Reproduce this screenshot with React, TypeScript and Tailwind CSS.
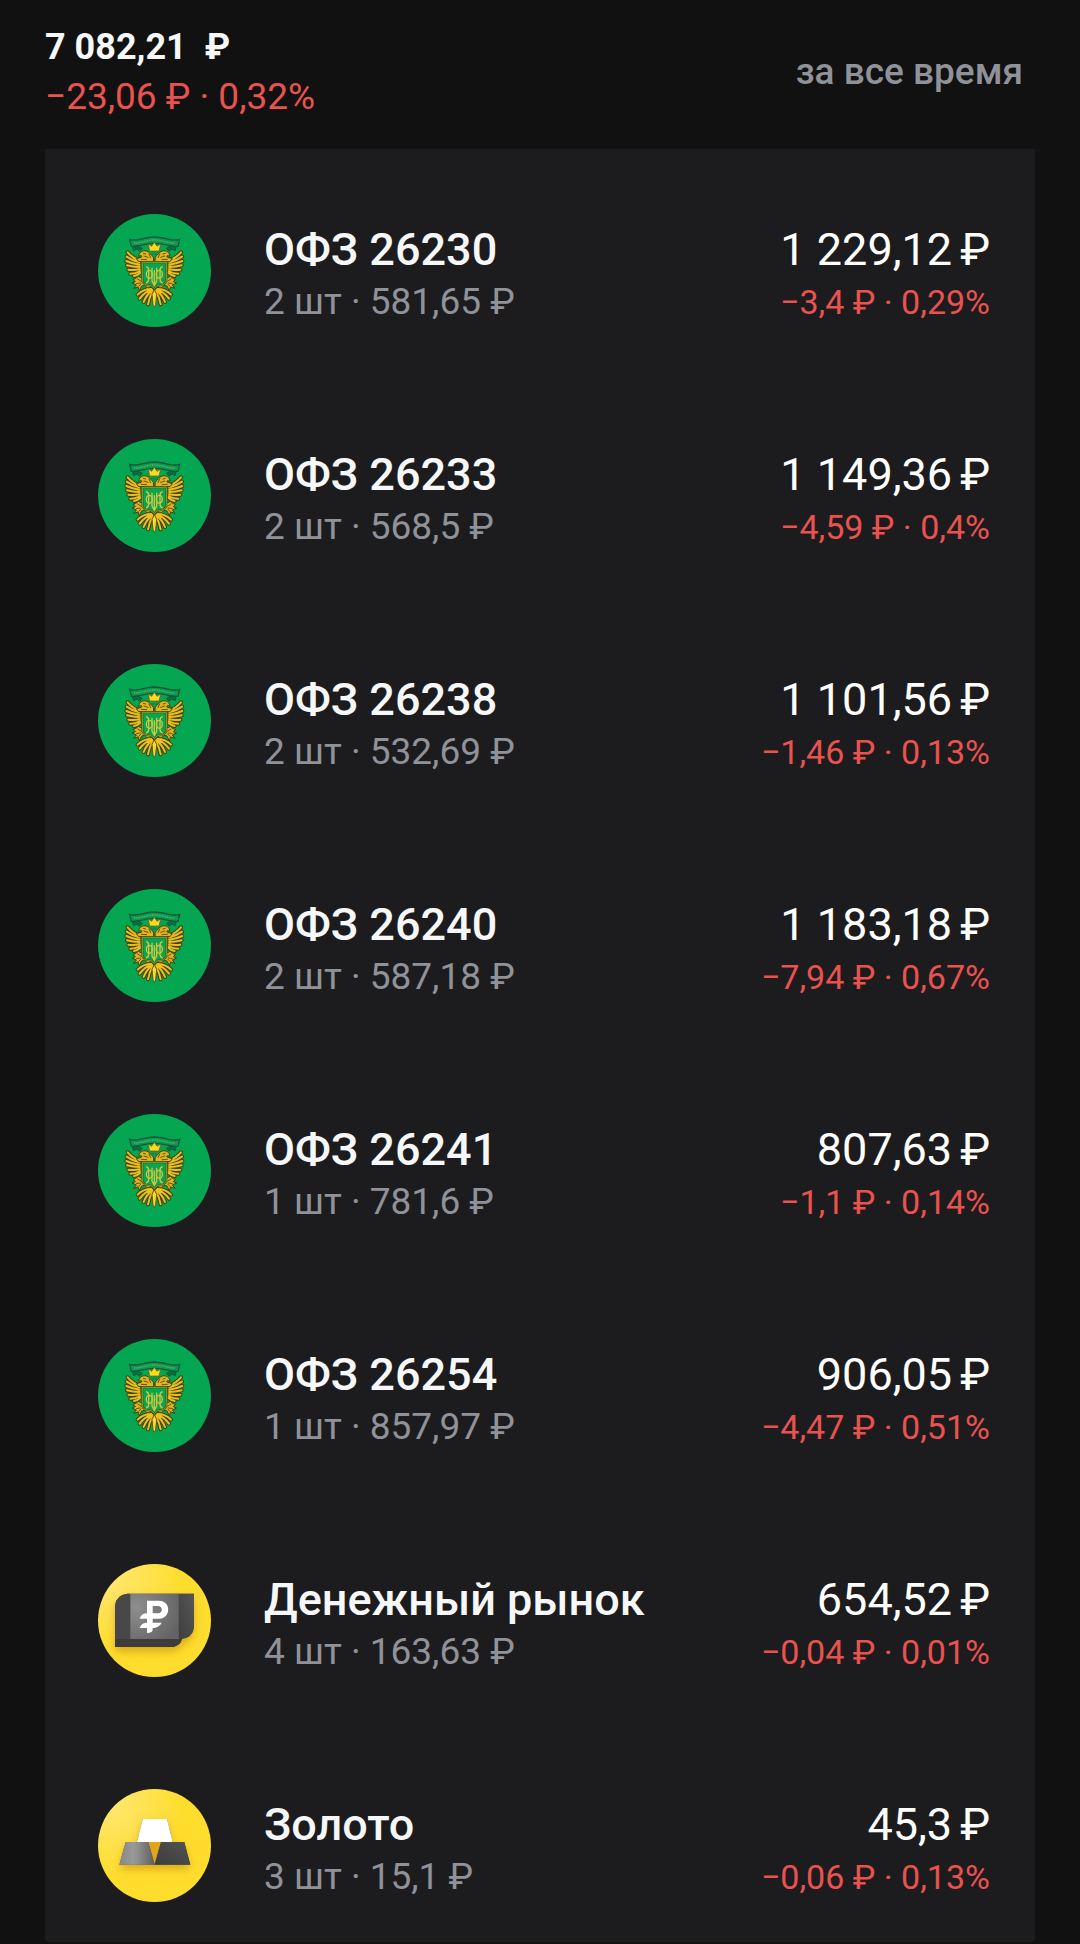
type IconKind = "eagle" | "money" | "gold";

type Holding = {
  name: string;
  icon: IconKind;
  quantity: string;
  value: string;
  change: string;
};

const holdings: Holding[] = [
  { name: "ОФЗ 26230", icon: "eagle", quantity: "2 шт · 581,65 ₽", value: "1 229,12", change: "−3,4 ₽ · 0,29%" },
  { name: "ОФЗ 26233", icon: "eagle", quantity: "2 шт · 568,5 ₽", value: "1 149,36", change: "−4,59 ₽ · 0,4%" },
  { name: "ОФЗ 26238", icon: "eagle", quantity: "2 шт · 532,69 ₽", value: "1 101,56", change: "−1,46 ₽ · 0,13%" },
  { name: "ОФЗ 26240", icon: "eagle", quantity: "2 шт · 587,18 ₽", value: "1 183,18", change: "−7,94 ₽ · 0,67%" },
  { name: "ОФЗ 26241", icon: "eagle", quantity: "1 шт · 781,6 ₽", value: "807,63", change: "−1,1 ₽ · 0,14%" },
  { name: "ОФЗ 26254", icon: "eagle", quantity: "1 шт · 857,97 ₽", value: "906,05", change: "−4,47 ₽ · 0,51%" },
  { name: "Денежный рынок", icon: "money", quantity: "4 шт · 163,63 ₽", value: "654,52", change: "−0,04 ₽ · 0,01%" },
  { name: "Золото", icon: "gold", quantity: "3 шт · 15,1 ₽", value: "45,3", change: "−0,06 ₽ · 0,13%" },
];

const wingFeathers =
  "M148 166Q128 160 113 142M148 172Q126 167 110 155M148 179Q126 176 109 168M148 186Q128 186 111 181M148 193Q132 197 115 194M149 199Q137 206 121 206M150 204Q143 211 132 213";
const tailFeathers =
  "M184 252Q160 252 143 269M186 254Q164 260 149 281M187 256Q170 268 161 291M189 258Q178 276 174 298";

function EagleHalf() {
  return (
    <g strokeLinecap="round">
      {/* wing */}
      <path d={wingFeathers} fill="none" stroke="#3c430f" strokeWidth="12" />
      <path d="M122 148Q132 158 150 163L154 205L146 205L140 170Z" fill="#8a7014" />
      <path d={wingFeathers} fill="none" stroke="#ecbd1f" strokeWidth="6" />
      {/* head and neck */}
      <path
        d="M190 170H146L139 161L153 157C160 153 153 150 146 154C147 142 157 135 169 138C180 141 182 150 190 156Z"
        fill="#e2b41d"
        stroke="#3f410f"
        strokeWidth="3"
      />
      <path d="M160 145L167 147M162 153L174 157M177 147L182 158M154 163L170 164" stroke="#6a540b" strokeWidth="3" />
      {/* leg and claw */}
      <path
        d="M157 220L145 214L136 221L129 223L136 230L126 234L139 240L131 250L144 246L148 257L155 243L164 241L171 248L184 252L178 237L167 229Z"
        fill="#ddb01f"
        stroke="#3e420f"
        strokeWidth="3"
      />
      <path d="M143 222L156 230M139 236L151 234M161 227L174 240M146 244L153 237" stroke="#6a560d" strokeWidth="3" />
      {/* tail */}
      <path d={tailFeathers} fill="none" stroke="#3c430f" strokeWidth="12" />
      <path d={tailFeathers} fill="none" stroke="#eebf1f" strokeWidth="6" />
    </g>
  );
}

function EagleIcon() {
  return (
    <svg viewBox="24 27 339 339" className="size-full" aria-hidden="true">
      <circle cx="193.5" cy="196.5" r="169.5" fill="#04a651" />
      <EagleHalf />
      <g transform="matrix(-1 0 0 1 386 0)">
        <EagleHalf />
      </g>
      {/* ribbon */}
      <path
        d="M119 103C141 111 160 96 193 96C226 96 247 111 269 103L264 124C244 127 224 115 193 115C162 115 143 127 124 124Z"
        fill="#0b9a52"
        stroke="#0b5a3a"
        strokeWidth="4"
      />
      <path d="M132 114C153 115 169 105 193 105C217 105 235 115 255 114" fill="none" stroke="#62b065" strokeWidth="4" strokeDasharray="3 2" />
      <path
        d="M128 125L130 137L142 132L148 139L157 130L143 123ZM258 125L256 137L244 132L238 139L229 130L243 123Z"
        fill="#07703f"
        stroke="#0a5a38"
        strokeWidth="3"
      />
      {/* crown */}
      <path d="M179 138L175 117L185 124L193 112L201 124L212 117L207 138Z" fill="#ffd91e" stroke="#665a10" strokeWidth="2" />
      <path d="M183 143H203L199 152L193 148L187 152Z" fill="#0c8d48" />
      {/* shield */}
      <path d="M157 172H229V224C229 238 217 241 203 242L193 251L183 242C169 241 157 238 157 224Z" fill="#08a552" stroke="#2a5c1a" strokeWidth="6" />
      <path d="M157 172H229V224C229 238 217 241 203 242L193 250L183 242C169 241 157 238 157 224Z" fill="none" stroke="#dcb422" strokeWidth="2" />
      <g fill="none" stroke="#d6c53a" strokeWidth="4">
        <path d="M168 185Q176 186 176 196V222Q176 232 168 234M218 185Q210 186 210 196V222Q210 232 218 234M186 188V228L193 241L200 228V188M193 196V241" />
        <ellipse cx="178" cy="208" rx="9" ry="12" />
        <ellipse cx="208" cy="208" rx="9" ry="12" />
      </g>
      <path d="M193 254L186 268L189 300L193 307L197 300L200 268Z" fill="#ffd829" stroke="#625710" strokeWidth="3" />
    </svg>
  );
}

function MoneyIcon() {
  return (
    <svg viewBox="24 27 339 339" className="size-full" aria-hidden="true">
      <defs>
        <radialGradient id="money-bg" cx="0.1" cy="0.12" r="0.65">
          <stop offset="0" stopColor="#ffe773" />
          <stop offset="1" stopColor="#ffdd2d" />
        </radialGradient>
        <radialGradient id="note-middle" cx="0.1" cy="0.3" r="1">
          <stop offset="0" stopColor="#8e8e8e" />
          <stop offset="1" stopColor="#636363" />
        </radialGradient>
        <linearGradient id="note-edge" x1="1" y1="0" x2="0" y2="1">
          <stop offset="0" stopColor="#565656" />
          <stop offset="1" stopColor="#3e3e3e" />
        </linearGradient>
        <filter id="money-shadow" x="-30%" y="-30%" width="160%" height="170%">
          <feDropShadow dx="0" dy="14" stdDeviation="12" floodColor="#b87800" floodOpacity="0.5" />
        </filter>
      </defs>
      <circle cx="193.5" cy="196.5" r="169.5" fill="url(#money-bg)" />
      <g filter="url(#money-shadow)">
        <path d="M75 152Q78 120 112 116H312V218Q307 248 276 251Q272 271 249 276H75Z" fill="#424242" />
      </g>
      <path d="M265 116H312V218Q307 248 276 251H265Z" fill="url(#note-edge)" />
      <path d="M75 152Q78 120 112 116H121V252H75Z" fill="#484848" />
      <path d="M75 252H276Q272 271 249 276H75Z" fill="#3c3c3c" />
      <rect x="121" y="116" width="145" height="136" fill="url(#note-middle)" />
      <path
        d="M171 137H207C244 137 244 190 207 191H188V203H215Q208 218 188 219V225Q187 234 171 234V219H149Q154 203 171 203V191H149Q154 175 171 175ZM188 153V175H205C219 174 219 154 205 153Z"
        fill="#fff"
        fillRule="evenodd"
      />
    </svg>
  );
}

function GoldIcon() {
  return (
    <svg viewBox="24 27 339 339" className="size-full" aria-hidden="true">
      <defs>
        <radialGradient id="gold-bg" cx="0.1" cy="0.12" r="0.65">
          <stop offset="0" stopColor="#ffe773" />
          <stop offset="1" stopColor="#ffdd2d" />
        </radialGradient>
        <linearGradient id="bar-left" x1="0" y1="0" x2="1" y2="0">
          <stop offset="0" stopColor="#868686" />
          <stop offset="0.4" stopColor="#9a9a9a" />
          <stop offset="1" stopColor="#606060" />
        </linearGradient>
        <linearGradient id="bar-right" x1="0" y1="1" x2="1" y2="0">
          <stop offset="0" stopColor="#3c3c3c" />
          <stop offset="1" stopColor="#535353" />
        </linearGradient>
        <filter id="gold-shadow" x="-30%" y="-30%" width="160%" height="170%">
          <feDropShadow dx="0" dy="13" stdDeviation="12" floodColor="#b87800" floodOpacity="0.5" />
        </filter>
      </defs>
      <circle cx="193.5" cy="196.5" r="169.5" fill="url(#gold-bg)" />
      <g filter="url(#gold-shadow)">
        <path d="M158 117H231L248 186H283L301 254H88L107 186H141Z" fill="#555" />
      </g>
      <path d="M158 117H231L248 186H141Z" fill="#fff" />
      <path d="M175 186H213L194 252Z" fill="#e0a51c" />
      <path d="M107 186H175L193 254H88Z" fill="url(#bar-left)" />
      <path d="M213 186H283L301 254H194Z" fill="url(#bar-right)" />
    </svg>
  );
}

const icons = { eagle: EagleIcon, money: MoneyIcon, gold: GoldIcon };

function HoldingRow({ holding }: { holding: Holding }) {
  const Icon = icons[holding.icon];
  return (
    <li className="flex items-end">
      <div className="size-[113px] shrink-0">
        <Icon />
      </div>
      <div className="ml-[53px] min-w-0 flex-1">
        <h2 className="text-[45px] leading-[54px] font-medium text-[#f6f7f8]">{holding.name}</h2>
        <p className="text-[37px] leading-[50px] text-[#909299]">{holding.quantity}</p>
      </div>
      <div className="text-right whitespace-nowrap">
        <p className="flex justify-end gap-2 text-[45px] leading-[54px] text-white">
          <span>{holding.value}</span>
          <span>₽</span>
        </p>
        <p className="text-[34px] leading-[50px] text-[#e9524f]">{holding.change}</p>
      </div>
    </li>
  );
}

export default function App() {
  return (
    <main className="min-h-screen bg-[#111111] px-[45px] pb-0.5 font-['Roboto','Noto_Sans',sans-serif]">
      <header className="flex h-[149px] items-center justify-between pr-3 pb-1.5">
        <div>
          <h1 className="text-[36px] leading-[50px] font-bold whitespace-pre text-[#f6f7f8]">{"7 082,21  ₽"}</h1>
          <p className="text-[37px] leading-[50px] text-[#e9524f]">−23,06 ₽ · 0,32%</p>
        </div>
        <button type="button" className="text-[37px] leading-[50px] font-medium text-[#909299]">
          за все время
        </button>
      </header>
      <ul className="flex flex-col gap-28 rounded-b-sm bg-[#1c1c1e] pt-[65px] pr-[45px] pb-10 pl-[53px]">
        {holdings.map((holding) => (
          <HoldingRow key={holding.name} holding={holding} />
        ))}
      </ul>
    </main>
  );
}
